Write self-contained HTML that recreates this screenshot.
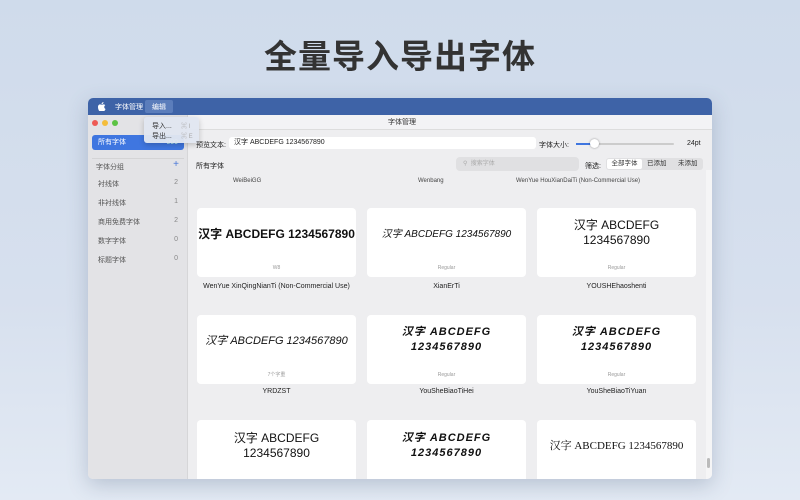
<!DOCTYPE html>
<html><head><meta charset="utf-8">
<style>
*{margin:0;padding:0;box-sizing:border-box}
body{width:800px;height:500px;overflow:hidden;background:linear-gradient(180deg,#cfdbeb 0%,#d7e0ee 60%,#e3eaf4 100%);font-family:"Liberation Sans","Noto Sans CJK SC",sans-serif;position:relative}
.title{position:absolute;top:30px;left:0;width:800px;text-align:center;font-size:33px;font-weight:bold;color:#333;letter-spacing:1px}
.win{position:absolute;left:88px;top:98px;width:624px;height:381px;border-radius:5px;overflow:hidden;background:#eeeef0;box-shadow:0 6px 20px rgba(60,80,110,.25)}
.menubar{position:absolute;left:0;top:0;width:624px;height:17px;background:#3e63a7;color:#fff;font-size:7px}
.menubar span{position:absolute;top:4px}
.mtab{position:absolute;left:57px;top:2px;width:28px;height:13px;background:#5b7dbb;border-radius:2px}
.titlebar{position:absolute;left:100px;top:17px;width:524px;height:15px;background:#f3f3f5;border-bottom:1px solid #ddd;font-size:7px;color:#333;line-height:15px}
.side{position:absolute;left:0;top:17px;width:100px;height:364px;background:#e3e3e6;border-right:1px solid #d6d6d8}
.dot{position:absolute;top:5px;width:6px;height:6px;border-radius:50%}
.sel{position:absolute;left:4px;top:20px;width:92px;height:15px;background:#3f76e0;border-radius:3px;color:#fff;font-size:7px;line-height:15px;padding-left:6px}
.si{position:absolute;left:10px;font-size:7px;color:#555;width:80px}
.si b{position:absolute;right:0;font-weight:normal;color:#888}
.menu{position:absolute;left:56px;top:19px;width:55px;height:26px;background:rgba(225,230,240,.96);border-radius:3px;box-shadow:0 2px 6px rgba(0,0,0,.2);font-size:7px;color:#333}
.content{position:absolute;left:100px;top:32px;width:524px;height:349px}
.lbl{position:absolute;font-size:7px;color:#222}
.card{position:absolute;width:159px;height:69px;background:#fff;border-radius:4px;text-align:center;color:#111}
.card .s{position:absolute;bottom:6px;width:100%;font-size:5px;color:#999}
.card .t{position:absolute;width:100%;font-size:11px;font-weight:bold;line-height:15px}
.name{position:absolute;width:159px;text-align:center;font-size:7px;color:#222}
</style></head><body>
<div class="title">全量导入导出字体</div>
<div class="win">
 <div class="menubar">
  <svg style="position:absolute;left:10px;top:4px" width="8" height="9" viewBox="0 0 16 18"><path fill="#fff" d="M11 0c.1 1.2-.4 2.3-1.1 3.1-.7.8-1.8 1.4-2.8 1.3-.1-1.1.4-2.3 1.1-3C8.9.6 10 .1 11 0zM14.6 6.2c-.1.1-2.1 1.2-2.1 3.7 0 2.9 2.5 3.9 2.6 3.9 0 .1-.4 1.4-1.3 2.7-.8 1.2-1.7 2.4-3 2.4-1.3 0-1.7-.8-3.2-.8s-2 .8-3.2.8c-1.3 0-2.2-1.3-3-2.4C.7 14.5-.1 12.2 0 10 0 6.6 2.2 4.8 4.3 4.8c1.3 0 2.3.8 3.1.8.8 0 2-.9 3.500-.9.6 0 2.500.1 3.700 1.500z"/></svg>
  <span style="left:27px">字体管理</span>
  <div class="mtab"></div>
  <span style="left:64px">编辑</span>
 </div>
 <div class="titlebar"><span style="position:absolute;left:200px">字体管理</span></div>
 <div class="side" >
  <div class="dot" style="left:4px;background:#ee5b55"></div>
  <div class="dot" style="left:14px;background:#f4bd3a"></div>
  <div class="dot" style="left:24px;background:#5cc344"></div>
  <div class="sel">所有字体<span style="position:absolute;right:6px;color:#cfe">000</span></div>
  <div style="position:absolute;left:4px;top:43px;width:92px;border-top:1px solid #d4d4d6"></div>
  <div class="si" style="top:47px;left:8px;width:83px">字体分组<b style="color:#4a78d8;font-size:10px;top:-3px">+</b></div>
  <div class="si" style="top:64px">衬线体<b>2</b></div>
  <div class="si" style="top:83px">非衬线体<b>1</b></div>
  <div class="si" style="top:102px">商用免费字体<b>2</b></div>
  <div class="si" style="top:121px">数字字体<b>0</b></div>
  <div class="si" style="top:140px">标题字体<b>0</b></div>
 </div>
 <div class="menu"><div style="position:absolute;left:8px;top:4px">导入...</div><div style="position:absolute;left:37px;top:4px;color:#aaa;font-size:6px">⌘ I</div><div style="position:absolute;left:8px;top:14px">导出...</div><div style="position:absolute;left:37px;top:14px;color:#aaa;font-size:6px">⌘ E</div></div>
 <div class="content">
  <div class="lbl" style="left:8px;top:10px">预览文本:</div>
  <div style="position:absolute;left:41px;top:7px;width:307px;height:12px;background:#fff;border-radius:3px;font-size:7px;line-height:12px;padding-left:5px;color:#222">汉字 ABCDEFG 1234567890</div>
  <div class="lbl" style="left:351px;top:10px">字体大小:</div>
  <div style="position:absolute;left:388px;top:13px;width:98px;height:2px;background:#ccc;border-radius:1px"></div>
  <div style="position:absolute;left:388px;top:13px;width:18px;height:2px;background:#3f76e0"></div>
  <div style="position:absolute;left:402px;top:9px;width:9px;height:9px;border-radius:50%;background:#fff;box-shadow:0 0 2px rgba(0,0,0,.4)"></div>
  <div class="lbl" style="left:499px;top:10px">24pt</div>
  <div class="lbl" style="left:8px;top:31px">所有字体</div>
  <div style="position:absolute;left:268px;top:27px;width:123px;height:14px;background:#e0e0e2;border-radius:4px;font-size:6px;color:#aaa;line-height:14px;padding-left:7px">⚲ &nbsp;搜索字体</div>
  <div class="lbl" style="left:397px;top:31px">筛选:</div>
  <div style="position:absolute;left:418px;top:28px;width:97px;height:12px;background:#e0e0e2;border-radius:3px;font-size:6.5px;color:#333;line-height:12px">
   <span style="position:absolute;left:1px;top:1px;width:35px;height:10px;background:#fff;border-radius:2px;line-height:10px;text-align:center">全部字体</span>
   <span style="position:absolute;left:41px">已添加</span><span style="position:absolute;left:72px">未添加</span></div>
  <div style="position:absolute;left:45px;top:48px;font-size:6px;color:#444">WeiBeiGG</div>
  <div style="position:absolute;left:230px;top:48px;font-size:6px;color:#444">Wenbang</div>
  <div style="position:absolute;left:328px;top:48px;font-size:6px;color:#444">WenYue HouXianDaiTi (Non-Commercial Use)</div>
  <div style="position:absolute;left:518px;top:40px;width:6px;height:309px;background:#f5f5f6"></div>
  <div style="position:absolute;left:519px;top:328px;width:3px;height:10px;background:#bbb;border-radius:2px"></div>

  <div class="card" style="left:9px;top:78px"><div class="t" style="top:19px;font-size:12px">汉字 ABCDEFG 1234567890</div><div class="s">W8</div></div>
  <div class="card" style="left:179px;top:78px"><div class="t" style="top:19px;font-weight:normal;font-style:italic;font-size:10px">汉字 ABCDEFG 1234567890</div><div class="s">Regular</div></div>
  <div class="card" style="left:349px;top:78px"><div class="t" style="top:10px;font-weight:normal;font-size:12px">汉字 ABCDEFG<br>1234567890</div><div class="s">Regular</div></div>
  <div class="name" style="left:9px;top:153px">WenYue XinQingNianTi (Non-Commercial Use)</div>
  <div class="name" style="left:179px;top:153px">XianErTi</div>
  <div class="name" style="left:349px;top:153px">YOUSHEhaoshenti</div>

  <div class="card" style="left:9px;top:185px"><div class="t" style="top:19px;font-weight:normal;font-style:italic;font-size:11px">汉字 ABCDEFG 1234567890</div><div class="s">7个字重</div></div>
  <div class="card" style="left:179px;top:185px"><div class="t" style="top:10px;font-style:italic;letter-spacing:1px">汉字 ABCDEFG<br>1234567890</div><div class="s">Regular</div></div>
  <div class="card" style="left:349px;top:185px"><div class="t" style="top:10px;font-style:italic;letter-spacing:1px">汉字 ABCDEFG<br>1234567890</div><div class="s">Regular</div></div>
  <div class="name" style="left:9px;top:258px">YRDZST</div>
  <div class="name" style="left:179px;top:258px">YouSheBiaoTiHei</div>
  <div class="name" style="left:349px;top:258px">YouSheBiaoTiYuan</div>

  <div class="card" style="left:9px;top:290px"><div class="t" style="top:11px;font-weight:normal;font-size:12px">汉字 ABCDEFG<br>1234567890</div></div>
  <div class="card" style="left:179px;top:290px"><div class="t" style="top:11px;font-style:italic;letter-spacing:1px">汉字 ABCDEFG<br>1234567890</div></div>
  <div class="card" style="left:349px;top:290px"><div class="t" style="top:19px;font-weight:normal;font-family:'Liberation Serif','Noto Serif CJK SC',serif;font-size:11px">汉字 ABCDEFG 1234567890</div></div>
 </div>
</div>
</body></html>
